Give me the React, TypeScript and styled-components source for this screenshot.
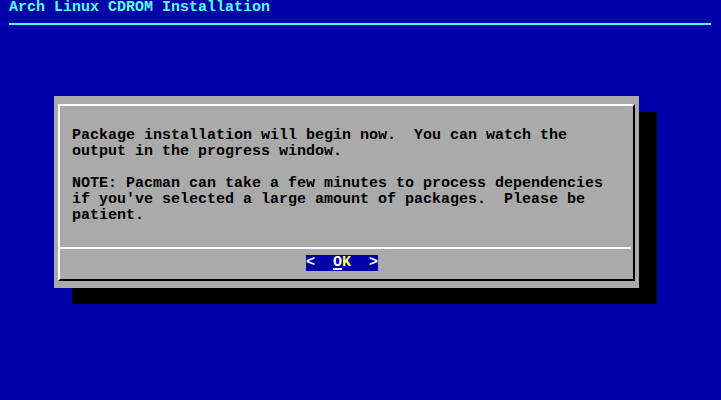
import React from 'react';
import styled, { createGlobalStyle } from 'styled-components';

const GlobalStyle = createGlobalStyle`
  body {
    margin: 0;
    background: #0000a8;
  }
`;

// 80x25 text screen, 9x16 character cells
const Screen = styled.div`
  width: 721px;
  height: 400px;
  background: #0000a8;
  font-family: "Liberation Mono", "DejaVu Sans Mono", monospace;
  font-size: 15px;
  font-weight: bold;
  line-height: 16px;
  overflow: hidden;
`;

const Header = styled.div`
  padding: 0 9px;
`;

const Title = styled.div`
  height: 16px;
  color: #55ffff;
  white-space: pre;
`;

const Rule = styled.div`
  height: 16px;
  width: 702px;
  box-sizing: border-box;
  padding-top: 7px;

  &::before {
    content: "";
    display: block;
    height: 2px;
    background: #55ffff;
  }
`;

const DialogArea = styled.div`
  padding: 64px 0 0 54px;
`;

const Dialog = styled.div`
  width: 585px;
  height: 192px;
  box-sizing: border-box;
  background: #aaaaaa;
  box-shadow: 18px 16px 0 #000;
  padding: 8px 4px 7px 4px;
`;

const Frame = styled.div`
  height: 100%;
  box-sizing: border-box;
  border-top: 2px solid #fff;
  border-left: 2px solid #fff;
  border-right: 2px solid #000;
  border-bottom: 2px solid #000;
  display: flex;
  flex-direction: column;
`;

const Body = styled.div`
  flex: 1;
  padding: 22px 0 0 12px;
  color: #000;
  white-space: pre;
`;

const Separator = styled.div`
  height: 2px;
  margin-right: 2px;
  background: #fff;
`;

const ButtonRow = styled.div`
  height: 30px;
  padding: 6px 0 0 246px;
  box-sizing: border-box;
`;

const Button = styled.span`
  display: inline-block;
  height: 16px;
  background: #0000a8;
  color: #fff;
  white-space: pre;
`;

const Hotkey = styled.span<{ $color: string; $underline?: boolean }>`
  color: ${p => p.$color};
  text-decoration: ${p => (p.$underline ? 'underline' : 'none')};
  text-underline-offset: 2px;
  text-decoration-thickness: 2px;
`;

const message = `Package installation will begin now.  You can watch the
output in the progress window.

NOTE: Pacman can take a few minutes to process dependencies
if you've selected a large amount of packages.  Please be
patient.`;

const App: React.FC = () => {
  return (
    <Screen>
      <GlobalStyle />
      <Header>
        <Title>Arch Linux CDROM Installation</Title>
        <Rule />
      </Header>
      <DialogArea>
        <Dialog>
          <Frame>
            <Body>{message}</Body>
            <Separator />
            <ButtonRow>
              <Button>
                {'<  '}
                <Hotkey $color="#ffffff" $underline>O</Hotkey>
                <Hotkey $color="#ffff55">K</Hotkey>
                {'  >'}
              </Button>
            </ButtonRow>
          </Frame>
        </Dialog>
      </DialogArea>
    </Screen>
  );
};

export default App;
